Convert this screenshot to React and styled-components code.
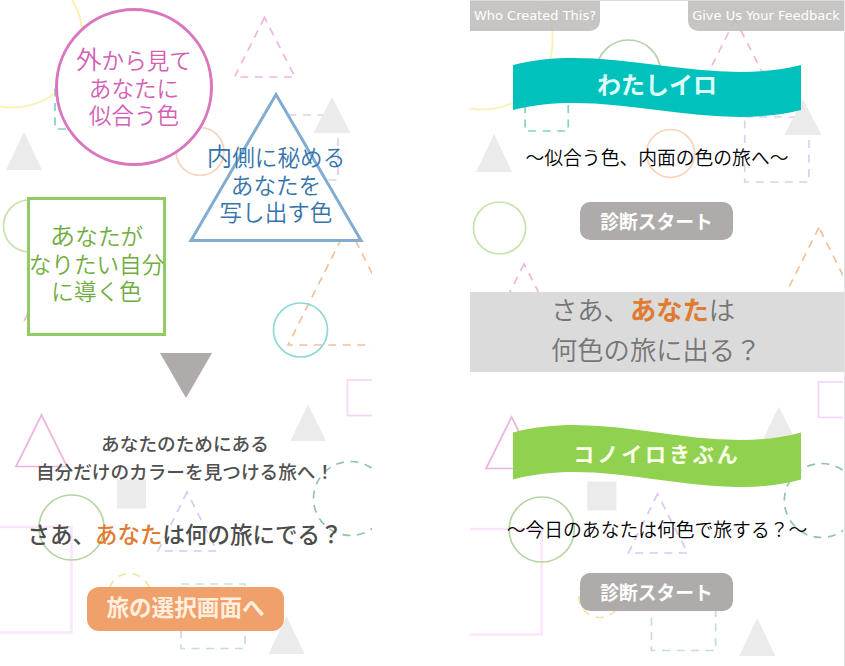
import React from "react";
import styled, { createGlobalStyle } from "styled-components";

const GlobalStyle = createGlobalStyle`
  * {
    box-sizing: border-box;
  }
  body {
    margin: 0;
    background: #fff;
    font-family: 'Noto Sans CJK JP', sans-serif;
  }
`

const Page = styled.div`
  display: flex;
  justify-content: space-between;
  width: 845px;
  height: 666px;
  overflow: hidden;
`

const Screen = styled.section`
  position: relative;
  isolation: isolate;
  width: ${props => props.$width}px;
  height: 666px;
  overflow: hidden;
  display: flex;
  flex-direction: column;
`

const MenuScreen = styled(Screen)`
  border-top: 1px solid #dcdcdc;
  border-right: 1px solid #e2e2e2;
  align-items: center;
`

const Pattern = styled.svg`
  position: absolute;
  z-index: -1;
  top: ${props => props.$top}px;
  left: 0;
  fill: none;
  stroke-width: 1.7;

  .dash {
    stroke-dasharray: 8 6.5;
  }
  .solid {
    fill: #ebebeb;
  }
`

const Figures = styled.div`
  display: flex;
  height: 353px;
`

const FigureColumn = styled.div`
  display: flex;
  flex-direction: column;
  width: 188px;
  padding-top: 8px;
`

const Lines = styled.p`
  margin: 0;
  font-size: 22.6px;
  line-height: 27px;
  font-weight: 350;
  text-align: center;
  white-space: nowrap;

  &::first-line {
    line-height: 29px;
  }
`

const FirstLetter = styled.span`
  font-size: 25.5px;
  line-height: 27px;
`

const Circle = styled.div`
  display: flex;
  justify-content: center;
  flex-shrink: 0;
  width: 158px;
  height: 158px;
  margin-left: 55px;
  padding-top: 33px;
  border: 3px solid #d976bd;
  border-radius: 50%;
  background: #fff;
  color: #d45fb5;
`

const Square = styled.div`
  display: flex;
  justify-content: center;
  width: 139px;
  height: 139px;
  margin: 31px 0 0 27px;
  padding-top: 20px;
  border: 3px solid #92cb62;
  background: #fff;
  color: #70ad3f;
`

const Triangle = styled.div`
  display: grid;
  justify-items: center;
  width: 176px;
  height: 152px;
  margin-top: 91px;
  color: #3574ab;

  > * {
    grid-area: 1 / 1;
  }
  p {
    padding-top: 50px;
  }
`

const DownArrow = styled.svg`
  display: block;
  flex-shrink: 0;
  margin-left: 160px;
  fill: #afabaa;
`

const Message = styled.p`
  margin: 31px 0 0;
  padding-right: 2px;
  font-size: 18.65px;
  line-height: 28px;
  font-weight: 500;
  color: #505050;
  text-align: center;
  white-space: nowrap;
`

const Question = styled.h2`
  margin: 33px 0 0;
  padding-right: 2px;
  font-size: 22.5px;
  line-height: 30px;
  font-weight: 500;
  color: #4c4c4c;
  text-align: center;
  white-space: nowrap;
`

const You = styled.em`
  font-style: normal;
  font-weight: ${props => props.$weight};
  color: #e07b2f;
`

const Button = styled.button`
  flex-shrink: 0;
  padding: 0 0 1px;
  border: none;
  border-radius: 10px;
  width: 153px;
  height: 38px;
  margin-right: 1px;
  font-family: inherit;
  font-size: 18.8px;
  line-height: 34px;
  font-weight: 700;
  color: #fff;
  background: #afabaa;
`

const SelectButton = styled(Button)`
  width: 197px;
  height: 44px;
  margin: 39px 0 0 87px;
  padding-bottom: 5px;
  border-radius: 12px;
  font-size: 22.6px;
  line-height: 39px;
  color: #ffefdf;
  background: #f0a06a;
`

const TabBar = styled.nav`
  display: flex;
  justify-content: space-between;
  align-self: stretch;
  height: 30px;
`

const Tab = styled.a`
  width: ${props => props.$width}px;
  border-radius: ${props => props.$radius};
  font-family: 'DejaVu Sans', sans-serif;
  font-size: 13px;
  line-height: 29px;
  text-align: center;
  white-space: nowrap;
  color: #fff;
  background: rgba(187, 184, 182, 0.82);
`

const RibbonBox = styled.div`
  display: grid;
  justify-items: center;
  flex-shrink: 0;
  margin-top: ${props => props.$top}px;
  height: ${props => props.$height}px;

  > * {
    grid-area: 1 / 1;
  }
`

const RibbonTitle = styled.h1`
  margin: 0;
  font-size: ${props => props.$size}px;
  font-weight: 700;
  letter-spacing: ${props => props.$spacing}px;
  line-height: ${props => props.$line}px;
  color: ${props => props.$color};
`

const Caption = styled.p`
  margin: ${props => props.$margin};
  font-size: 18.8px;
  line-height: 28px;
  font-weight: 350;
  color: #000;
  white-space: nowrap;
`

const Band = styled.div`
  align-self: stretch;
  flex-shrink: 0;
  height: 80px;
  margin: 52px 0 53px;
  padding-left: 81px;
  font-size: 26.3px;
  line-height: 40px;
  font-weight: 350;
  color: #757575;
  background: #dbdbdb;

  p {
    position: relative;
    top: -3px;
    margin: 0;
    white-space: nowrap;
  }
`

const Shapes = ({ width, top }) => (
  <Pattern width={width} height="666" viewBox="0 0 372 666" preserveAspectRatio="none" $top={top}>
    <circle cx="12" cy="37" r="70.5" stroke="#faf2b4" strokeWidth="2" />
    <circle cx="158" cy="70" r="32" stroke="#b9cfa8" />
    <rect className="dash" x="55" y="88" width="43" height="41" stroke="#7ed3c8" />
    <path className="solid" d="M24 132l18 38H6z" />
    <circle cx="200" cy="151.5" r="24" stroke="#f8d4bb" />
    <path className="dash" d="M264.500 17.500L234.500 77H295z" stroke="#efb7de" />
    <rect className="dash" x="274" y="115" width="64" height="65" stroke="#dcd0ee" />
    <path className="solid" d="M332 97l18.500 36h-37z" />
    <circle cx="29.500" cy="226" r="26" stroke="#c4e3ac" />
    <path className="dash" d="M54 262L24 321h60z" stroke="#efb7de" />
    <path className="dash" d="M348 225.500L288 345h120z" stroke="#f2bf9b" />
    <circle cx="300.500" cy="330" r="27" stroke="#8fd9d3" />
    <rect x="347.500" y="380" width="50" height="35.500" stroke="#f5d6f3" />
    <path d="M41.500 415L16 466.500h51z" stroke="#efb4dd" />
    <path className="solid" d="M308 404.500l18 36.500h-35.500z" />
    <path className="solid" d="M117 479.500h29v29h-29z" />
    <rect x="-34" y="527" width="105.500" height="105.500" stroke="#fbe5fb" strokeWidth="2.5" />
    <circle cx="71.500" cy="527.500" r="32.500" stroke="#b4d4a4" />
    <path className="dash" d="M187 492l-29 59h59z" stroke="#dac8f2" />
    <circle className="dash" cx="350.500" cy="498.500" r="37" stroke="#93c4ab" />
    <circle className="dash" cx="129.500" cy="594.500" r="21" stroke="#f5e3a4" />
    <rect className="dash" x="181" y="584" width="64" height="64.500" stroke="#c4dbe8" />
    <path className="solid" d="M286.500 616l18 38h-36z" />
  </Pattern>
)

// wavy flag: both long edges share the same curve
const Ribbon = ({ top, height, wave, fill, children }) => {
  const y = wave * 0.29
  return (
    <RibbonBox $top={top} $height={height + y * 2}>
      <svg width="288" height={height + y * 2}>
        <path
          fill={fill}
          d={`M0 ${y}c96 ${-wave} 192 ${wave} 288 0v${height}c-96 ${wave} -192 ${-wave} -288 0z`}
        />
      </svg>
      {children}
    </RibbonBox>
  )
}

const IntroScreen = () => (
  <Screen $width={372}>
    <Shapes width={372} top={0} />
    <Figures>
      <FigureColumn>
        <Circle>
          <Lines><FirstLetter>外</FirstLetter>から見て<br />あなたに<br />似合う色</Lines>
        </Circle>
        <Square>
          <Lines><FirstLetter>あ</FirstLetter>なたが<br />なりたい自分<br />に導く色</Lines>
        </Square>
      </FigureColumn>
      <Triangle>
        <svg width="176" height="152">
          <path d="M88 3.500L3 149.500h170z" fill="#fff" stroke="#83acd1" strokeWidth="3" />
        </svg>
        <Lines><FirstLetter>内</FirstLetter>側に秘める<br />あなたを<br />写し出す色</Lines>
      </Triangle>
    </Figures>
    <DownArrow width="52" height="45">
      <path d="M0 0h52L26 45z" />
    </DownArrow>
    <Message>あなたのためにある<br />自分だけのカラーを見つける旅へ！</Message>
    <Question>さあ、<You $weight={500}>あなた</You>は何の旅にでる？</Question>
    <SelectButton>旅の選択画面へ</SelectButton>
  </Screen>
)

const SelectScreen = () => (
  <MenuScreen $width={375}>
    <Shapes width={373} top={1} />
    <TabBar>
      <Tab $width={130} $radius="0 0 10px 0">Who Created This?</Tab>
      <Tab $width={156} $radius="0 0 0 10px">Give Us Your Feedback</Tab>
    </TabBar>
    <Ribbon top={27} height={45} wave={24} fill="#00c1bb">
      <RibbonTitle $size={24} $spacing={0} $line={52} $color="#dcfffb">わたしイロ</RibbonTitle>
    </Ribbon>
    <Caption $margin="26.5px 0 31px">～似合う色、内面の色の旅へ～</Caption>
    <Button>診断スタート</Button>
    <Band>
      <p>さあ、<You $weight={700}>あなた</You>は</p>
      <p>何色の旅に出る？</p>
    </Band>
    <Ribbon top={0} height={47} wave={26} fill="#91d150">
      <RibbonTitle $size={21} $spacing={2.9} $line={57} $color="#fbffe9">コノイロきぶん</RibbonTitle>
    </Ribbon>
    <Caption $margin="28px 0 30px">～今日のあなたは何色で旅する？～</Caption>
    <Button>診断スタート</Button>
  </MenuScreen>
)

export default function App() {
  return (
    <Page>
      <GlobalStyle />
      <IntroScreen />
      <SelectScreen />
    </Page>
  )
}
